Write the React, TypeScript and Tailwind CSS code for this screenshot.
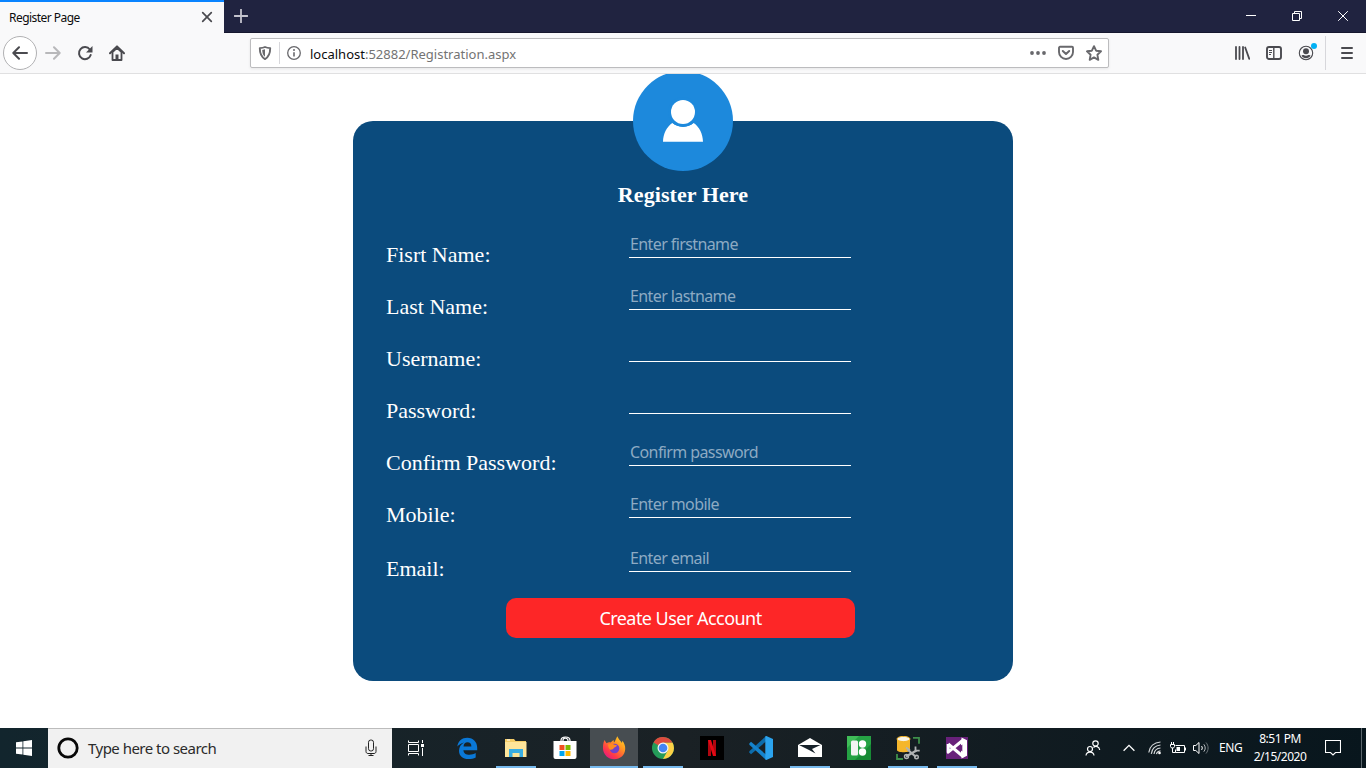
import type { ReactNode } from "react";

function Svg({ w, h, vb, children, cls = "" }: { w: number; h: number; vb?: string; children: ReactNode; cls?: string }) {
  return (
    <svg width={w} height={h} viewBox={vb ?? `0 0 ${w} ${h}`} fill="none" className={`block shrink-0 ${cls}`}>
      {children}
    </svg>
  );
}

function TitleBar() {
  return (
    <header className="flex h-[33px] shrink-0 border-b border-[#16172e] bg-[#202340]">
      <div className="flex h-[33px] w-[224px] items-center justify-between border-t-2 border-[#0a84ff] bg-[#f9f9fa] pr-[11px] pl-[9px]">
        <span className="text-[12px] leading-4 tracking-[-0.54px] text-[#0c0c0d]">Register Page</span>
        <Svg w={12} h={12} cls="mb-px">
          <path d="M1.7 1.7l8.6 8.6M10.3 1.7l-8.6 8.6" stroke="#4a4a4f" strokeWidth="1.7" strokeLinecap="round" />
        </Svg>
      </div>
      <div className="flex flex-1 items-center pl-[10px]">
        <Svg w={14} h={14}>
          <path d="M7 .5v13M.5 7h13" stroke="#c3c3cd" strokeWidth="1.8" strokeLinecap="round" />
        </Svg>
      </div>
      <div className="flex w-[138px]">
        <div className="grid w-[46px] place-items-center">
          <Svg w={10} h={10}><path d="M0 4.5h10" stroke="#fff" /></Svg>
        </div>
        <div className="grid w-[46px] place-items-center">
          <Svg w={10} h={10}><path d="M.5 2.5h7v7h-7zM2.500 2.500v-2h7v7h-2" stroke="#fff" /></Svg>
        </div>
        <div className="grid w-[46px] place-items-center">
          <Svg w={10} h={10}><path d="M.2.2l9.600 9.600M9.800.2L.2 9.800" stroke="#fff" /></Svg>
        </div>
      </div>
    </header>
  );
}

function NavBar() {
  return (
    <nav className="flex h-[41px] shrink-0 items-center border-b border-[#e0e0e1] bg-[#f9f9fa]">
      <div className="ml-[3px] grid size-[34px] shrink-0 place-items-center rounded-full border border-[#b1b1b3] bg-white">
        <Svg w={16} h={16}>
          <path d="M15 8H1.500M7 2.300L1.300 8 7 13.700" stroke="#4a4a4f" strokeWidth="2" strokeLinecap="round" strokeLinejoin="round" />
        </Svg>
      </div>
      <Svg w={16} h={16} cls="ml-[8px]">
        <path d="M1 8h13.500M9 2.300L14.700 8 9 13.700" stroke="#b8b8ba" strokeWidth="2" strokeLinecap="round" strokeLinejoin="round" />
      </Svg>
      <Svg w={16} h={16} cls="ml-[16px]">
        <path d="M12.800 4.500A6 6 0 1 0 13.700 10" stroke="#4a4a4f" strokeWidth="2" strokeLinecap="round" />
        <path d="M15.500 1v6.500H9z" fill="#4a4a4f" />
      </Svg>
      <Svg w={16} h={16} cls="ml-[16px]">
        <path d="M1 8.300L8 1.400l7 6.900" stroke="#4a4a4f" strokeWidth="2" strokeLinecap="round" strokeLinejoin="round" />
        <path d="M3.500 7v8h9V7L8 2.800z" stroke="#4a4a4f" strokeWidth="1.800" strokeLinejoin="round" />
        <path d="M6.500 15v-5.500h3V15z" fill="#4a4a4f" />
      </Svg>
      <div className="ml-[125px] flex h-[30px] w-[859px] shrink-0 items-center rounded-[2px] border border-[#bcbcbe] bg-white shadow-[0_1px_3px_rgba(0,0,0,0.08)]">
        <Svg w={14} h={14} cls="ml-[7px]">
          <path d="M7 1c1.800.8 3.600 1 5.200 1.100 0 5-.7 8.600-5.200 11C2.500 10.700 1.800 7.100 1.800 2.100 3.400 2 5.200 1.800 7 1z" stroke="#68686c" strokeWidth="1.900" strokeLinejoin="round" />
          <path d="M7 3.300v7.500C4.900 9.200 4.300 7 4.200 4z" fill="#68686c" />
        </Svg>
        <div className="ml-[7px] h-[22px] w-px bg-[#d7d7db]" />
        <Svg w={14} h={14} cls="ml-[7px]">
          <circle cx="7" cy="7" r="6.300" stroke="#68686c" strokeWidth="1.300" />
          <path d="M7 6.200v4.300" stroke="#68686c" strokeWidth="1.600" />
          <circle cx="7" cy="3.900" r="1" fill="#68686c" />
        </Svg>
        <div className="mt-[2px] ml-[9px] text-[13px] leading-5 whitespace-nowrap text-[#737373]">
          <span className="text-[#0c0c0d]">localhost</span>:52882/Registration.aspx
        </div>
        <Svg w={16} h={4} cls="ml-auto">
          <circle cx="2" cy="2" r="1.900" fill="#68686c" /><circle cx="8" cy="2" r="1.900" fill="#68686c" /><circle cx="14" cy="2" r="1.900" fill="#68686c" />
        </Svg>
        <Svg w={16} h={16} cls="ml-[12px]">
          <path d="M2 1.800h12a1 1 0 0 1 1 1V7a7 7 0 0 1-14 0V2.800a1 1 0 0 1 1-1z" stroke="#68686c" strokeWidth="1.900" />
          <path d="M4.800 6L8 9l3.200-3" stroke="#68686c" strokeWidth="2" strokeLinecap="round" strokeLinejoin="round" />
        </Svg>
        <Svg w={16} h={16} cls="mr-[6px] ml-[12px]">
          <path d="M8 1.200l2.100 4.500 4.900.6-3.600 3.400.9 5.100L8 12.400l-4.300 2.400.9-5.100L1 6.300l4.900-.6z" stroke="#68686c" strokeWidth="1.900" strokeLinejoin="round" />
        </Svg>
      </div>
      <Svg w={16} h={16} cls="ml-[125px]">
        <path d="M2 2v12M5.500 2v12M9 2v12" stroke="#4a4a4f" strokeWidth="1.800" strokeLinecap="round" />
        <path d="M11.200 2.500l4 11.300" stroke="#4a4a4f" strokeWidth="1.800" strokeLinecap="round" />
      </Svg>
      <Svg w={16} h={16} cls="ml-[16px]">
        <rect x="1" y="2" width="14" height="12" rx="2" stroke="#4a4a4f" strokeWidth="1.900" />
        <path d="M7.800 2v12" stroke="#4a4a4f" strokeWidth="1.400" />
        <path d="M3 5.500h3M3 7.500h3M3 9.500h2" stroke="#4a4a4f" />
      </Svg>
      <div className="relative ml-[16px]">
        <Svg w={16} h={16}>
          <circle cx="8" cy="8" r="6.700" stroke="#4a4a4f" strokeWidth="1.100" />
          <circle cx="8" cy="6.300" r="3" fill="#4a4a4f" />
          <path d="M3.500 10.500c.8-.4 1.600-.5 2.200-.5 1.300 1 3.300 1 4.600 0 .6 0 1.400.1 2.200.5-.8 1.800-2.500 2.700-4.500 2.700s-3.700-.9-4.500-2.700z" fill="#4a4a4f" />
        </Svg>
        <div className="absolute top-[-2px] left-[13px] size-[6px] rounded-full bg-[#00b0f4]" />
      </div>
      <div className="ml-[11px] h-[34px] w-px bg-[#d7d7db]" />
      <Svg w={12} h={12} cls="ml-[15px]">
        <path d="M1 1h10M1 6h10M1 11h10" stroke="#4a4a4f" strokeWidth="2" strokeLinecap="round" />
      </Svg>
    </nav>
  );
}

const fields = [
  { label: "Fisrt Name:", hint: "Enter firstname" },
  { label: "Last Name:", hint: "Enter lastname" },
  { label: "Username:", hint: "" },
  { label: "Password:", hint: "" },
  { label: "Confirm Password:", hint: "Confirm password" },
  { label: "Mobile:", hint: "Enter mobile" },
  { label: "Email:", hint: "Enter email" },
];

function RegisterCard() {
  return (
    <main className="flex min-h-0 flex-1 justify-center overflow-hidden bg-white pt-[47px]">
      <section className="flex h-[560px] w-[660px] flex-col rounded-[20px] bg-[#0b4b7d]">
        <div className="mx-auto -mt-[50px] grid size-[100px] shrink-0 place-items-center rounded-full bg-[#1d89dc]">
          <Svg w={100} h={100}>
            <path d="M30 70.700c.2-8 3.700-14.700 9.300-18.700a17 17 0 0 0 21.400 0C66.300 56 69.800 62.700 70 70.700z" fill="#fff" />
            <circle cx="50" cy="41" r="15" fill="#1d89dc" />
            <circle cx="50" cy="41" r="12" fill="#fff" />
          </Svg>
        </div>
        <h1 className="mt-[11px] text-center font-['Liberation_Serif',serif] text-[22px] leading-[26px] font-bold tracking-[0.08px] text-white">Register Here</h1>
        <form className="mt-[24px] pl-[33px]">
          {fields.map((f, i) => (
            <div key={f.label} className={`flex items-start ${i === 5 ? "h-[54px]" : "h-[52px]"}`}>
              <label className="w-[243px] pt-[10px] font-['Liberation_Serif',serif] text-[22px] leading-[26px] text-white">{f.label}</label>
              <div className="h-[26px] w-[222px] border-b border-white pl-px font-['Noto_Sans',sans-serif] text-[16px] leading-[24px] tracking-[-0.6px] text-[#8daac3]">
                {f.hint}
              </div>
            </div>
          ))}
        </form>
        <button className="ml-[153px] h-[40px] w-[349px] shrink-0 rounded-[10px] bg-[#fd2627] font-['Noto_Sans',sans-serif] text-[18px] tracking-[-0.54px] text-white">
          Create User Account
        </button>
      </section>
    </main>
  );
}

const apps: { name: string; line?: boolean; active?: boolean; icon: ReactNode }[] = [
  {
    name: "edge",
    icon: (
      <path d="M2.300 10.600C3.200 5 7 1.800 12.200 1.800c6.300 0 10 4.400 10 10v2.400H8.400c.2 3 2.600 4.600 6 4.600 2.400 0 4.500-.6 6.300-1.700v4.300c-2 1.100-4.500 1.700-7.200 1.700C7.600 23.100 4 19.700 4 14.700c0-3.700 2-6.700 5-8.300-3 .8-5.200 2.200-6.700 4.200zM8.500 10.400h7.900c0-2.700-1.500-4.100-3.900-4.100-2.200 0-3.700 1.500-4 4.100z" fill="#0a78d7" />
    ),
  },
  {
    name: "explorer",
    line: true,
    icon: (
      <>
        <path d="M1 3h9l1.500 2H22v15H1z" fill="#f5cd67" />
        <path d="M1 6h21.500v15H1z" fill="#fee59a" />
        <path d="M3 4h3" stroke="#fff" />
        <path d="M5 13h14v8h-3.500v-4h-7v4H5z" fill="#39aee3" />
      </>
    ),
  },
  {
    name: "store",
    icon: (
      <>
        <path d="M8 7V4.500C8 2 9.600 1 12.500 1S17 2 17 4.500V7M10 6V3.800C10.500 1 15.500 2 15 5" stroke="#fff" strokeWidth="1.200" />
        <path d="M.5 5h23v16a2 2 0 0 1-2 2h-19a2 2 0 0 1-2-2z" fill="#fff" />
        <path d="M6.500 9h5v5h-5z" fill="#f25022" /><path d="M12.500 9h5v5h-5z" fill="#7fba00" />
        <path d="M6.500 15h5v5h-5z" fill="#00a4ef" /><path d="M12.500 15h5v5h-5z" fill="#ffb900" />
      </>
    ),
  },
  {
    name: "firefox",
    line: true,
    active: true,
    icon: (
      <>
        <defs>
          <linearGradient id="ff" x1="1" y1="0" x2=".2" y2="1">
            <stop offset="0" stopColor="#ffe226" /><stop offset=".4" stopColor="#ff9422" /><stop offset=".75" stopColor="#ff3b47" /><stop offset="1" stopColor="#e31587" />
          </linearGradient>
        </defs>
        <path d="M2.500 4l2 3.200C6 6.300 7.500 6.200 8.600 6.500L11.500 4l.5 2.500C13.500 5 14 2.500 15.300.300c1 2.700 3 4.200 4.700 6.700l.2-2.200c2.200 2.400 3.200 5.200 3 8.200-.2 6-5 10.300-11 10.300S1.200 18.500 1 12.800C.9 9.800 1.200 6.500 2.500 4z" fill="url(#ff)" />
        <circle cx="12.500" cy="12.500" r="4.800" fill="#7342c9" />
        <path d="M6 8.500c2-1 4.500-1 6.500.3l2.500.4c-.3 1.800-2.500 1.700-3.500 3.300-.8 1.200-2.500 1.300-3.500 1.300C6.800 12.500 6.200 10.500 6 8.500z" fill="#ff8a20" />
      </>
    ),
  },
  {
    name: "chrome",
    line: true,
    icon: (
      <>
        <circle cx="12" cy="12" r="11" fill="#249b59" />
        <path d="M12 12L2.500 6.500A11 11 0 0 1 21.600 6.700H12z" fill="#dd4b3e" />
        <path d="M12 6.700h9.600A11 11 0 0 1 12 23l4.700-8.300z" fill="#fdd046" />
        <circle cx="12" cy="12" r="5.500" fill="#f4f4f4" /><circle cx="12" cy="12" r="4.300" fill="#4285f4" />
      </>
    ),
  },
  {
    name: "netflix",
    icon: (
      <>
        <path d="M0 0h24v24H0z" fill="#000" />
        <path d="M8 4h3v16H8zM13 4h3v16h-3z" fill="#b1060f" />
        <path d="M8 4h3l5 16h-3z" fill="#e50914" />
      </>
    ),
  },
  {
    name: "code",
    icon: (
      <>
        <path d="M17.500 5L2 18.200.300 16.500v-1.200L16.800.300z" fill="#0d6cab" />
        <path d="M17.500 19L2 5.800.300 7.500v1.200l16.500 15z" fill="#1583cc" />
        <path d="M17.300 0L24 3v18l-6.700 3c-.8 0-1-.6-1-1.200V1.200c0-.6.2-1.200 1-1.200z" fill="#2ba3ee" />
      </>
    ),
  },
  {
    name: "mail",
    line: true,
    icon: (
      <>
        <path d="M0 9l12-7 12 7v12H0z" fill="#fff" />
        <path d="M1 9h21.500L14 13l3.500 4.500L11 14z" fill="#17222a" />
      </>
    ),
  },
  {
    name: "blocks",
    icon: (
      <>
        <path d="M0 0h24v24H0z" fill="#25a244" />
        <path d="M0 0h12L0 12z" fill="#3fbd58" /><path d="M24 8v16H8z" fill="#178a35" />
        <rect x="4" y="4.500" width="7" height="15" rx="1.500" fill="#f2f4f2" />
        <circle cx="15.500" cy="8" r="3.700" fill="#fff" /><circle cx="15.500" cy="16" r="3.700" fill="#fff" />
      </>
    ),
  },
  {
    name: "database",
    line: true,
    icon: (
      <>
        <path d="M1 3v11c0 3 13 3 13 0V3z" fill="#f5b62b" />
        <ellipse cx="7.500" cy="3" rx="6.500" ry="2.600" fill="#f7f2e4" stroke="#f5b62b" />
        <path d="M17 1.800h6v6M1 18v5h6" stroke="#3e8f4b" strokeWidth="1.800" />
        <path d="M11.500 13.500l8.500 7.500M20.500 14.500L10 20.500" stroke="#b0b3b5" strokeWidth="2.200" />
        <circle cx="10.500" cy="20.500" r="2" stroke="#b0b3b5" strokeWidth="1.400" /><circle cx="20.500" cy="21" r="1.800" stroke="#b0b3b5" strokeWidth="1.400" />
        <path d="M19.500 10.500v4.200h4.200M10 11.500l4 3" stroke="#b0b3b5" strokeWidth="1.800" />
      </>
    ),
  },
  {
    name: "studio",
    line: true,
    icon: (
      <>
        <path d="M1 1h22v22H1z" fill="#68217a" />
        <path d="M3.200 8v8.200L17.500 4.500v15.500L3.200 8" stroke="#fff" strokeWidth="3" strokeLinejoin="round" />
        <path d="M16.500 1.500l5.500 2.700v15.600l-5.500 2.700z" fill="#fff" />
        <path d="M17.300 8.500v7l-4.800-3.500z" fill="#68217a" />
      </>
    ),
  },
];

function Taskbar() {
  return (
    <footer className="flex h-[40px] shrink-0 bg-linear-to-r from-[#12252d] via-[#1a2125] to-[#08161d]">
      <div className="grid w-[48px] place-items-center">
        <Svg w={16} h={16}>
          <path d="M0 2.300L6.500 1.400v6.100H0zM7.300 1.300L16 0v7.500H7.300zM0 8.400h6.500v6.200L0 13.700zM7.300 8.400H16V16l-8.700-1.300z" fill="#fff" />
        </Svg>
      </div>
      <div className="flex w-[344px] items-center border-t border-[#bcbcbc] bg-[#f1f1f1] pl-[9px]">
        <Svg w={22} h={22} cls="mb-px"><circle cx="11" cy="11" r="9.200" stroke="#080808" strokeWidth="2.800" /></Svg>
        <span className="mb-[2px] ml-[9px] text-[15px] leading-5 tracking-[-0.52px] text-[#2b2b2b]">Type here to search</span>
        <Svg w={12} h={18} cls="mr-[15px] mb-px ml-auto">
          <rect x="3.500" y="1" width="5" height="11" rx="2.300" stroke="#222" />
          <path d="M1 7.500v5c0 1.200.8 2 2 2h6c1.200 0 2-.8 2-2v-5M6 14.500v2M3.500 16.500h5" stroke="#222" />
        </Svg>
      </div>
      <div className="grid w-[48px] place-items-center">
        <Svg w={16} h={16}>
          <path d="M.5.500v2h10v-2M.5 4.500h10v7H.5zM.5 15.500v-2h10v2M14.500 0v3M14.500 8v8" stroke="#fff" />
          <path d="M13 4h3v3h-3z" fill="#fff" />
        </Svg>
      </div>
      <div className="ml-[3px] flex gap-px">
        {apps.map((a) => (
          <div key={a.name} className={`flex h-[40px] w-[48px] flex-col items-center pt-[8px] ${a.active ? "bg-[#474d51]" : ""}`}>
            <Svg w={24} h={24}>{a.icon}</Svg>
            {a.line && <div className={`mt-auto h-[2px] bg-[#76b9ed] ${a.active ? "w-[48px]" : "w-[40px]"}`} />}
          </div>
        ))}
      </div>
      <div className="ml-auto flex items-center pr-[4px] text-white">
        <Svg w={16} h={16}>
          <circle cx="10.500" cy="3.500" r="2.700" stroke="#fff" strokeWidth="1.200" />
          <path d="M8.500 7.500c2-2 5.800-1.200 6.200 2.500" stroke="#fff" strokeWidth="1.200" />
          <circle cx="5" cy="9" r="2.500" stroke="#fff" strokeWidth="1.200" />
          <path d="M1 15.500c.5-4.500 7.500-4.500 8 0" stroke="#fff" strokeWidth="1.200" />
        </Svg>
        <Svg w={12} h={8} cls="ml-[22px]"><path d="M.6 6.800L6 1.400l5.400 5.400" stroke="#fff" strokeWidth="1.300" /></Svg>
        <Svg w={14} h={14} cls="ml-[13px]">
          <path d="M.8 11.500C1.500 5.500 6 1.500 12.500 1M3.300 12.800C4 7.500 7.500 4.500 12.500 4M6 13c.5-3.500 3-5.700 6.500-6M8.500 13.200c.3-2 1.800-3.200 4-3.400" stroke="#d5d8da" strokeWidth="1.200" />
          <circle cx="11.500" cy="12" r="1.300" fill="#fff" />
        </Svg>
        <Svg w={16} h={13} cls="ml-[8px]">
          <path d="M5.500 3.500h9v7h-9v-3M15.500 5.500v3" stroke="#fff" />
          <path d="M6.500 5H10v4H6.500z" fill="#fff" />
          <path d="M1.500 0v3M3.500 0v3M.5 2.500h4v2l-1 1.500h-2l-1-1.500zM2.500 6v4.500h3" stroke="#fff" />
        </Svg>
        <Svg w={17} h={14} cls="ml-[7px]">
          <path d="M.5 4.500h2.300L6 1.500v11l-3.200-3H.5z" stroke="#fff" />
          <path d="M8.500 5c1 1.200 1 2.800 0 4" stroke="#fff" />
          <path d="M10.800 3.300c1.900 2.200 1.900 5.200 0 7.400" stroke="#b4b9bc" /><path d="M13 1.500c2.800 3.300 2.800 7.700 0 11" stroke="#6e777c" />
        </Svg>
        <span className="ml-[9px] w-[24px] text-[12px] tracking-[-0.4px]">ENG</span>
        <div className="ml-[7px] w-[60px] text-center text-[12px] leading-[18px] tracking-[-0.48px] whitespace-nowrap">
          <div>8:51 PM</div>
          <div>2/15/2020</div>
        </div>
        <Svg w={16} h={16} cls="ml-[15px]"><path d="M.5.500h15v12h-5L8 15l-2.500-2.500h-5z" stroke="#fff" strokeWidth="1.100" /></Svg>
        <div className="ml-[20px] h-[40px] w-px bg-[#5b666c]" />
      </div>
    </footer>
  );
}

export default function App() {
  return (
    <div className="flex h-[768px] w-[1366px] flex-col overflow-hidden bg-white font-['Noto_Sans',sans-serif]">
      <TitleBar />
      <NavBar />
      <RegisterCard />
      <Taskbar />
    </div>
  );
}
